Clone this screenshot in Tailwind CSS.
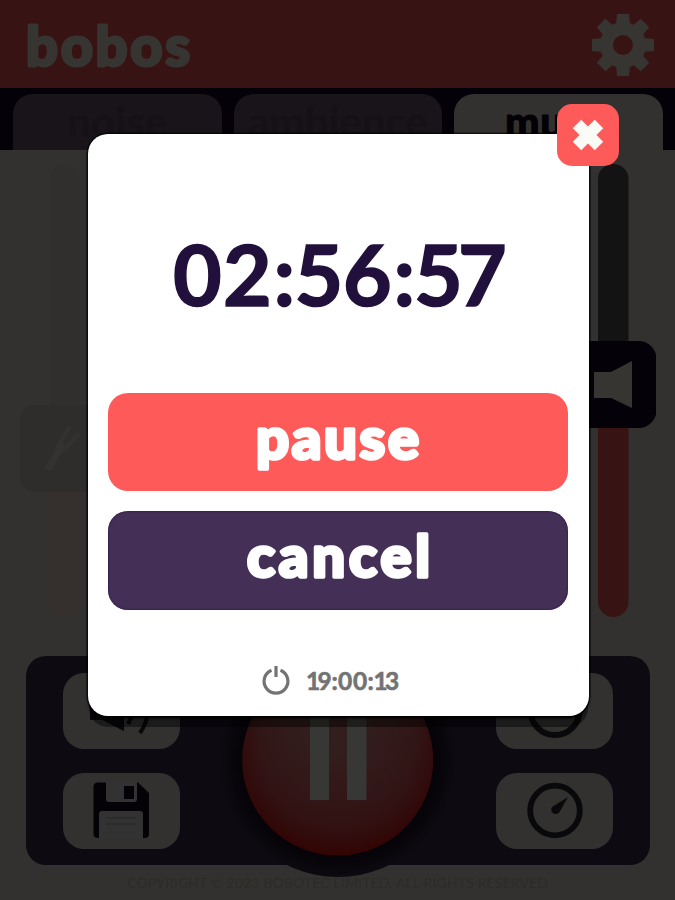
<!DOCTYPE html>
<html lang="en">
<head>
<meta charset="utf-8">
<title>bobos</title>
<script src="https://cdn.jsdelivr.net/npm/@tailwindcss/browser@4"></script>
</head>
<body class="bg-[#33312f] font-['Lato',sans-serif]">
<div class="relative flex h-[900px] w-[675px] flex-col overflow-hidden">
  <header class="flex h-[88px] shrink-0 items-center justify-between bg-[#381314] pr-[20px] pl-[24px]">
    <svg class="h-[88px] w-[180px]" viewBox="24 0 180 88"><text x="26" y="66" font-size="56" font-weight="900" textLength="164" fill="#363532" stroke="#363532" stroke-width="3" stroke-linejoin="round">bobos</text></svg>
    <svg class="mt-[3px] h-[64px] w-[64px]" viewBox="-32 -31 64 64">
      <g fill="#363532">
        <path id="tooth" d="M-7-20L-6-31H6L7-20Z"/>
        <use href="#tooth" transform="rotate(45)"/><use href="#tooth" transform="rotate(90)"/><use href="#tooth" transform="rotate(135)"/><use href="#tooth" transform="rotate(180)"/><use href="#tooth" transform="rotate(225)"/><use href="#tooth" transform="rotate(270)"/><use href="#tooth" transform="rotate(315)"/>
      </g>
      <circle r="16.5" fill="none" stroke="#363532" stroke-width="13"/>
    </svg>
  </header>

  <nav class="flex h-[62px] shrink-0 items-end gap-[12px] bg-[#040108] pr-[12px] pl-[13px]">
    <div class="h-[56px] w-[209px] rounded-t-[20px] bg-[#19141a]"><svg class="h-[56px] w-[209px]" viewBox="13 94 209 56"><text x="67" y="137" font-size="42" font-weight="900" textLength="100" fill="#151117">noise</text></svg></div>
    <div class="h-[56px] w-[208px] rounded-t-[20px] bg-[#19141a]"><svg class="h-[56px] w-[208px]" viewBox="234 94 208 56"><text x="248" y="137" font-size="42" font-weight="900" textLength="180" fill="#151117">ambience</text></svg></div>
    <div class="h-[56px] w-[209px] rounded-t-[20px] bg-[#33312f]"><svg class="h-[56px] w-[209px]" viewBox="454 94 209 56"><text x="505" y="137" font-size="41" font-weight="900" textLength="109" fill="#030106" stroke="#030106" stroke-linejoin="round">music</text></svg></div>
  </nav>

  <main class="flex h-[506px] shrink-0 justify-between pr-[19px] pl-[20px]">
    <svg class="h-[506px] w-[90px]" viewBox="20 150 90 506">
      <rect x="50" y="164" width="30" height="454" rx="15" fill="#312f2d"/>
      <path d="M50 490H80V603A15 15 0 0 1 50 603Z" fill="#35302e"/>
      <rect x="20" y="405" width="88" height="87" rx="15" fill="#2f2d2b"/>
      <path d="M49 467L62 446" stroke="#343230" stroke-width="7" stroke-linecap="round"/>
      <path d="M57 448L69 428M64 450L78 435" stroke="#343230" stroke-width="4" stroke-linecap="round"/>
    </svg>
    <svg class="h-[506px] w-[90px]" viewBox="566 150 90 506">
      <path d="M598 350V178A15.3 15.3 0 0 1 628.500 178V350Z" fill="#131314"/>
      <path d="M598 420V603A15.3 15.3 0 0 0 628.500 603V420Z" fill="#381314"/>
      <rect x="570" y="341" width="86.500" height="87" rx="18" fill="#040108"/>
      <path d="M594 372H611L632 361V408L611 398H594Z" fill="#363532"/>
    </svg>
  </main>

  <section class="mr-[25px] ml-[26px] flex h-[209px] shrink-0 items-start justify-between rounded-[20px] bg-[#0e0a11] px-[37px] pt-[17px]">
    <div class="flex flex-col gap-[24px]">
      <div class="h-[76px] w-[117px] rounded-[21px] bg-[#323130]"><svg class="h-[76px] w-[117px]" viewBox="63 673 117 76"><path d="M92 702H103L122 684V728L103 718H92ZM128 724L136 708M140 733Q148 722 149 706" fill="#09070a" stroke="#09070a" stroke-width="4"/></svg></div>
      <div class="h-[76px] w-[117px] rounded-[21px] bg-[#323130]"><svg class="h-[76px] w-[117px]" viewBox="63 773 117 76">
        <path d="M98 782.500H138L149 793V834Q149 838 145 838H98Q93.500 838 93.500 834V787Q93.500 782.500 98 782.500Z" fill="#040207"/>
        <path d="M106 782H137V799Q137 802 134 802H109Q106 802 106 799ZM99 838.500V814Q99 811 102 811H140Q143 811 143 814V838.500Z" fill="#333233"/>
        <path d="M124 786H134V799H124Z" fill="#040207"/><path d="M106 818H136M106 824H136" stroke="#2c2b2c" stroke-width="1.500"/>
      </svg></div>
    </div>
    <div class="flex flex-col gap-[24px]">
      <div class="h-[76px] w-[117px] rounded-[21px] bg-[#323130]"><svg class="h-[76px] w-[117px]" viewBox="496 673 117 76"><circle cx="555" cy="710.500" r="24.500" fill="none" stroke="#09090b" stroke-width="6"/></svg></div>
      <div class="h-[76px] w-[117px] rounded-[21px] bg-[#323130]"><svg class="h-[76px] w-[117px]" viewBox="496 773 117 76"><circle cx="555" cy="810.500" r="24.800" fill="none" stroke="#09090b" stroke-width="5.800"/><path d="M568 797L559.500 812A4.500 4.500 0 1 1 552 807Z" fill="#09090b"/></svg></div>
    </div>
  </section>
  <footer class="h-[35px] shrink-0">
    <svg class="h-[35px] w-[675px]" viewBox="0 865 675 35"><text x="127" y="888" font-size="14" textLength="421" fill="#2c2b29">COPYRIGHT © 2023 BOBOTEC LIMITED. ALL RIGHTS RESERVED</text></svg>
  </footer>

  <!-- Playback button overlapping the control panel -->
  <svg class="absolute top-[640px] left-[210px] h-[240px] w-[256px]" viewBox="210 640 256 240">
    <defs>
      <radialGradient id="red" gradientUnits="userSpaceOnUse" cx="338" cy="744" r="111"><stop offset="0" stop-color="#351515"/><stop offset=".7" stop-color="#321314"/><stop offset=".88" stop-color="#310b0b"/><stop offset="1" stop-color="#330403"/></radialGradient>
      <radialGradient id="tone" gradientUnits="userSpaceOnUse" cx="338" cy="720" r="95"><stop offset=".3" stop-color="#302421" stop-opacity=".65"/><stop offset="1" stop-color="#302421" stop-opacity="0"/></radialGradient>
      <radialGradient id="halo"><stop offset=".81" stop-color="#050308"/><stop offset=".91" stop-color="#08060b"/><stop offset="1" stop-color="#0d0910"/></radialGradient>
    </defs>
    <circle cx="338" cy="760" r="117" fill="url(#halo)"/>
    <circle cx="337.700" cy="760" r="95.500" fill="url(#red)"/>
    <circle cx="337.700" cy="760" r="95.500" fill="url(#tone)"/>
    <path d="M310 710H329V800H310ZM347 710H366.500V800H347Z" fill="#373835"/>
  </svg>

  <!-- Timer dialog -->
  <div class="absolute top-[134px] left-[88px] flex h-[582px] w-[501px] flex-col items-center rounded-[20px] bg-white pt-[88px] shadow-[0_0_0_1.5px_#00000099,0_12px_0_-1px_#00000070,0_2px_3px_#000]">
    <svg class="h-[110px] w-[370px] shrink-0" viewBox="153 222 370 110"><text x="172 222 272.500 293.500 342 392.500 413 457" y="306" font-size="84" font-weight="700" fill="#22103c" stroke="#22103c" stroke-width="1.500">02:56:57</text></svg>
    <button class="mt-[61px] mr-px h-[98px] w-[460px] shrink-0 rounded-[20px] bg-[#ff5a5a]"><svg class="h-[98px] w-[460px]" viewBox="108 393 460 98"><text x="256" y="458.500" font-size="58" font-weight="900" textLength="163" fill="#fff" stroke="#fff" stroke-width="3.500" stroke-linejoin="round">pause</text></svg></button>
    <button class="mt-[20px] mr-px h-[99px] w-[460px] shrink-0 rounded-[20px] bg-[#442f56] shadow-[inset_0_0_2px_#220044]"><svg class="h-[99px] w-[460px]" viewBox="108 511 460 99"><text x="247" y="577" font-size="58" font-weight="900" textLength="183" fill="#fff" stroke="#fff" stroke-width="3.500" stroke-linejoin="round">cancel</text></svg></button>
    <div class="mt-[54px] mr-[15px] flex h-[34px] w-[140px] shrink-0 items-center justify-between">
      <svg class="h-[34px] w-[30px]" viewBox="261 664 30 34"><path d="M271.500 670.200A11.900 11.900 0 1 0 280.500 670.200M276 666V677" fill="none" stroke="#737373" stroke-width="3.200"/></svg>
      <svg class="h-[34px] w-[100px]" viewBox="301 664 100 34"><text x="306 317.500 331.500 338 353 367.500 373.500 385" y="690" font-size="24.500" font-weight="700" fill="#737373" stroke="#737373" stroke-width=".6">19:00:13</text></svg>
    </div>
  </div>
  <button class="absolute top-[104px] left-[557px] flex h-[62px] w-[62px] items-center justify-center rounded-[15px] bg-[#ff5a5a]"><svg class="h-[34px] w-[34px]" viewBox="-17 -17 34 34"><path d="M-11-11L11 11M11-11L-11 11" stroke="#fafaf7" stroke-width="12"/></svg></button>
</div>
</body>
</html>
